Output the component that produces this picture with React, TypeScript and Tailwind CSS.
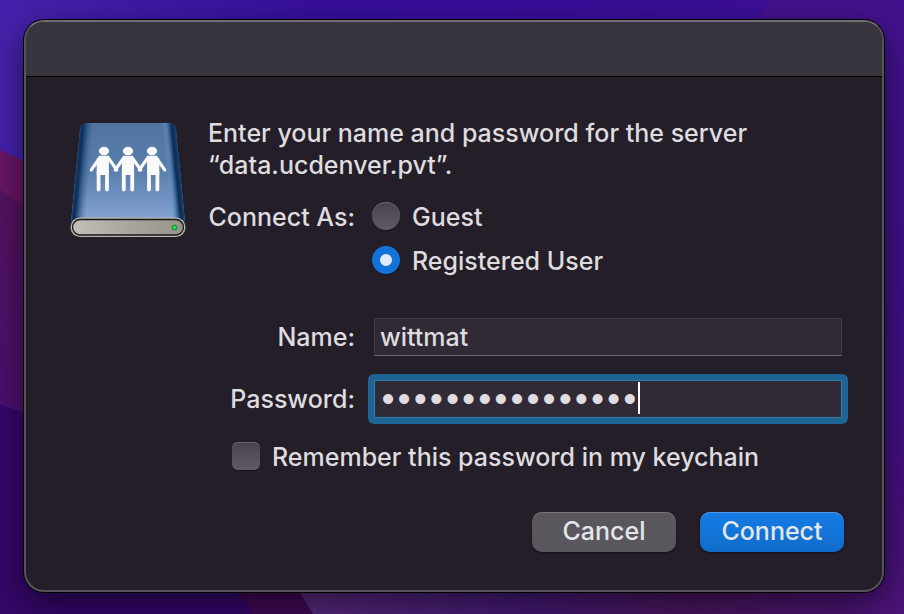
import { useState } from 'react';

const radioClass =
  'mb-0.5 size-7 shrink-0 appearance-none rounded-full bg-linear-to-b from-[#48424c] to-[#5f5b64] shadow-[inset_0_1px_0_#69646d,0_1px_1px_#17121a] outline-none checked:border-8 checked:border-[#1274d8] checked:bg-none checked:bg-[#e0ebf7] checked:shadow-[0_1px_1px_#17121a]';

const buttonClass =
  'flex h-10 w-36 items-center justify-center rounded-[10px] pb-0.5 text-[25px] leading-8 text-[#e3e6ea]';

function Wallpaper() {
  return (
    <svg
      className="absolute inset-0 -z-10 size-full"
      viewBox="0 0 904 614"
      preserveAspectRatio="none"
      aria-hidden="true"
    >
      <defs>
        <linearGradient id="sky" x1="0" y1="0" x2="1" y2="0">
          <stop offset="0" stopColor="#4522ac" />
          <stop offset="0.35" stopColor="#370e9c" />
          <stop offset="1" stopColor="#3b0f96" />
        </linearGradient>
        <linearGradient id="dusk" x1="0" y1="0" x2="0" y2="1">
          <stop offset="0" stopColor="#44128e" />
          <stop offset="0.5" stopColor="#3d1187" />
          <stop offset="0.85" stopColor="#47107c" />
          <stop offset="1" stopColor="#4c1478" />
        </linearGradient>
        <linearGradient id="hill" x1="0" y1="0" x2="0" y2="1">
          <stop offset="0" stopColor="#551260" />
          <stop offset="1" stopColor="#4c0f70" />
        </linearGradient>
        <linearGradient id="ground" x1="0" y1="0" x2="1" y2="0">
          <stop offset="0" stopColor="#5b2c80" />
          <stop offset="0.4" stopColor="#451a76" />
          <stop offset="0.7" stopColor="#4a1560" />
          <stop offset="1" stopColor="#4c1478" />
        </linearGradient>
      </defs>
      <rect width="904" height="614" fill="url(#sky)" />
      <path d="M772 0C766 8 762 14 754 20L700 614H904V0Z" fill="url(#dusk)" />
      <path d="M0 150L60 178V240L0 192Z" fill="#691668" />
      <path d="M0 190L80 240V430L0 404Z" fill="url(#hill)" />
      <path d="M0 404L80 432L260 614H0Z" fill="#35076b" />
      <path d="M220 560L252 614H330L290 560Z" fill="#410957" />
      <path d="M280 560L313 614H870V560Z" fill="url(#ground)" />
    </svg>
  );
}

// lean shifts the legs outwards, the lid is seen in perspective
function Person({ x, lean }: { x: number; lean: number }) {
  return (
    <g transform={`translate(${x} 0)`} fill="#fafafa" stroke="#fafafa">
      <ellipse cx="0" cy="29" rx="5.1" ry="4.3" stroke="none" />
      <path d="M-4 35.500L-12.800 48M4 35.500L12.800 48" strokeWidth="3.100" strokeLinecap="round" fill="none" />
      <path
        d={`M-4.500 33.800H4.500L${6.1 + lean} 37V53H${-6.1 + lean}V37Z`}
        stroke="none"
      />
      <path
        d={`M${-4.2 + lean} 50V67.500M${4.2 + lean} 50V67.500`}
        strokeWidth="3.800"
        strokeLinecap="round"
        fill="none"
      />
    </g>
  );
}

function ServerIcon() {
  return (
    <svg className="mt-[5px] h-29 w-29 shrink-0" viewBox="0 0 116 116" role="img" aria-label="File server">
      <defs>
        <linearGradient id="lid" x1="0" y1="0" x2="0" y2="1">
          <stop offset="0" stopColor="#50749e" />
          <stop offset="0.5" stopColor="#5b7fae" />
          <stop offset="1" stopColor="#86a5d3" />
        </linearGradient>
        <linearGradient id="leftEdge" gradientUnits="userSpaceOnUse" x1="4" y1="50" x2="20" y2="51.500">
          <stop offset="0" stopColor="#1c4677" />
          <stop offset="0.3" stopColor="#0b2d57" />
          <stop offset="1" stopColor="#3d6ca2" stopOpacity="0" />
        </linearGradient>
        <linearGradient id="rightEdge" gradientUnits="userSpaceOnUse" x1="112" y1="50" x2="97" y2="51.500">
          <stop offset="0" stopColor="#1c4677" />
          <stop offset="0.4" stopColor="#0b2d57" />
          <stop offset="0.7" stopColor="#4f7db2" stopOpacity="0.8" />
          <stop offset="1" stopColor="#7ca0ce" stopOpacity="0" />
        </linearGradient>
        <linearGradient id="metal" x1="0" y1="0" x2="1" y2="0">
          <stop offset="0" stopColor="#c3c0b9" />
          <stop offset="0.5" stopColor="#aaa69f" />
          <stop offset="1" stopColor="#96948a" />
        </linearGradient>
      </defs>
      <path d="M17 1H99Q105 1 106 8L115 100H1L10 8Q11 1 17 1Z" fill="url(#lid)" />
      <path d="M17 1H99Q105 1 106 8L115 100H1L10 8Q11 1 17 1Z" fill="url(#leftEdge)" />
      <path d="M17 1H99Q105 1 106 8L115 100H1L10 8Q11 1 17 1Z" fill="url(#rightEdge)" />
      <rect x="0.500" y="95.500" width="115" height="19.500" rx="9.750" fill="#b9b8b1" />
      <rect x="2.500" y="97.500" width="111" height="15.500" rx="7.750" fill="url(#metal)" stroke="#15171a" strokeWidth="1.300" />
      <circle cx="104.500" cy="105.500" r="2.700" fill="#0d8f20" />
      <circle cx="104.500" cy="105.500" r="1.800" fill="#20e545" />
      <Person x={34} lean={-1.2} />
      <Person x={58} lean={0} />
      <Person x={82} lean={1.2} />
    </svg>
  );
}

export default function App() {
  const [connectAs, setConnectAs] = useState('registered');
  const [name, setName] = useState('wittmat');
  const [password, setPassword] = useState('passwordpassword');
  const [remember, setRemember] = useState(false);

  return (
    <main className="relative isolate min-h-screen overflow-hidden pt-5 pr-5 pb-[22px] pl-6 font-['Inter','Liberation_Sans',sans-serif] text-[25px] leading-8 font-medium text-[#dedcdf]">
      <Wallpaper />

      <div
        role="dialog"
        aria-labelledby="prompt"
        className="overflow-hidden rounded-[20px] border-2 border-[#57535a] border-t-[#716d74] bg-[#241e29] shadow-[0_0_0_1px_#000,0_12px_36px_rgba(0,0,0,0.55)]"
      >
        <header className="h-[55px] border-b border-black bg-[#39353e]" />

        <form
          className="pt-10 pr-[38px] pb-[38px] pl-11"
          onSubmit={(e) => e.preventDefault()}
        >
          <div className="flex gap-[22px]">
            <ServerIcon />

            <div className="min-w-0 flex-1">
              <p id="prompt">
                Enter your name and password for the server
                <br />
                “data.ucdenver.pvt”.
              </p>

              <fieldset
                aria-labelledby="connect-as"
                className="mt-5 grid grid-cols-[147px_1fr] gap-x-[17px]"
              >
                <span id="connect-as" className="text-right whitespace-nowrap">Connect As:</span>
                <div className="flex flex-col gap-3">
                  <label className="flex items-center gap-3">
                    <input
                      type="radio"
                      name="connectAs"
                      className={radioClass}
                      checked={connectAs === 'guest'}
                      onChange={() => setConnectAs('guest')}
                    />
                    Guest
                  </label>
                  <label className="flex items-center gap-3">
                    <input
                      type="radio"
                      name="connectAs"
                      className={radioClass}
                      checked={connectAs === 'registered'}
                      onChange={() => setConnectAs('registered')}
                    />
                    Registered User
                  </label>
                </div>
              </fieldset>

              <div className="mt-[41px] mr-0.5 grid grid-cols-[147px_1fr] items-center gap-x-[19px] gap-y-6">
                <label htmlFor="name" className="text-right">Name:</label>
                <input
                  id="name"
                  type="text"
                  className="h-[38px] w-full min-w-0 border border-[#3f3a44] border-b-[#6a656e] bg-[#2f2a35] px-[5px] outline-none"
                  value={name}
                  onChange={(e) => setName(e.target.value)}
                />

                <label htmlFor="password" className="text-right">Password:</label>
                <div className="relative -m-1.5 rounded-md bg-[#1d6494] p-1.5">
                  <input
                    id="password"
                    type="password"
                    className="block h-[38px] w-full min-w-0 border border-[#2f7fa9] bg-[#2f2a35] px-[5px] pb-1.5 text-[32px] font-semibold caret-transparent outline-none"
                    value={password}
                    onChange={(e) => setPassword(e.target.value)}
                  />
                  <span className="pointer-events-none absolute top-2 left-[270px] h-8 w-0.5 bg-white" />
                </div>
              </div>

              <label className="mt-[23px] ml-6 flex items-center gap-3 whitespace-nowrap">
                <input
                  type="checkbox"
                  className="mb-0.5 size-7 shrink-0 appearance-none rounded-md bg-linear-to-b from-[#48424c] to-[#5f5b64] shadow-[inset_0_1px_0_#69646d,0_1px_1px_#17121a] checked:bg-[#1274d8] checked:bg-none"
                  checked={remember}
                  onChange={(e) => setRemember(e.target.checked)}
                />
                Remember this password in my keychain
              </label>
            </div>
          </div>

          <div className="mt-[39px] flex justify-end gap-6">
            <button
              type="button"
              className={`${buttonClass} bg-[#5a565e] shadow-[inset_0_1px_0_#777379,0_1px_2px_#130e17]`}
            >
              Cancel
            </button>
            <button
              type="submit"
              className={`${buttonClass} bg-linear-to-b from-[#147ce6] to-[#106cca] shadow-[inset_0_1px_0_#5297e6,0_1px_2px_#130e17]`}
            >
              Connect
            </button>
          </div>
        </form>
      </div>
    </main>
  );
}
